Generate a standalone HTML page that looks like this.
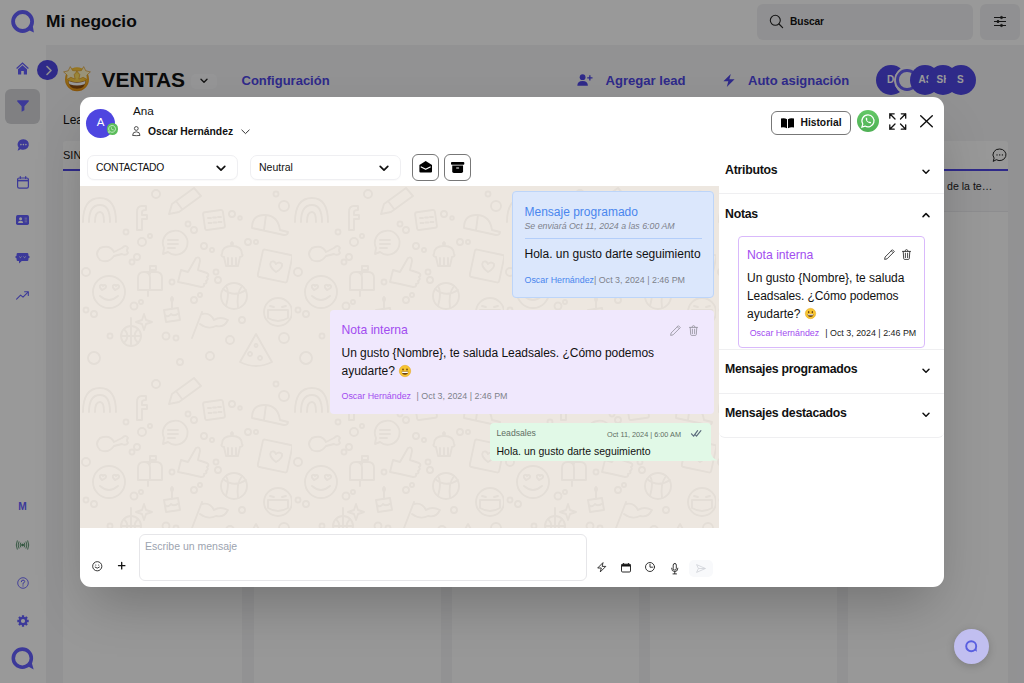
<!DOCTYPE html>
<html lang="es">
<head>
<meta charset="utf-8">
<title>Mi negocio</title>
<style>
*{box-sizing:border-box;margin:0;padding:0}
html,body{width:1024px;height:683px;overflow:hidden}
body{font-family:"Liberation Sans",sans-serif;color:#111;background:#f3f4f6;position:relative}
.abs{position:absolute}
.t{position:absolute;white-space:nowrap;line-height:1}
svg{display:block;position:absolute;overflow:visible}
/* ---------- background app ---------- */
#topbar{left:0;top:0;width:1024px;height:45px;background:#fff}
#sidebar{left:0;top:45px;width:45.600px;height:638px;background:#fff}
.col{position:absolute;top:141px;width:187px;height:560px;background:#fdfdfe;border-radius:3px}
#overlay{left:0;top:0;width:1024px;height:683px;background:rgba(0,0,0,.4)}
.pur{color:#4f46e5}
.av{position:absolute;top:65px;width:30px;height:30px;border-radius:50%;background:#4f46e5;color:#fff;font-weight:700;font-size:10px;overflow:hidden}
/* ---------- modal ---------- */
#modal{left:80px;top:97px;width:864px;height:490px;background:#fff;border-radius:11px;box-shadow:0 25px 50px -12px rgba(0,0,0,.26);overflow:hidden}
.sel{position:absolute;top:58px;height:25px;width:151px;border:1px solid #efeff2;border-radius:7px;background:#fff;box-shadow:0 1px 1px rgba(0,0,0,.025)}
.ibtn{position:absolute;top:57px;width:27px;height:27px;border:1px solid #777;border-radius:6px;background:#fff}
#chat{left:0;top:89px;width:639px;height:342px;background:#ede7e0;overflow:hidden}
.sec{position:absolute;left:639px;width:225px;border-bottom:1px solid #efeff1}
.h{font-weight:700;font-size:12.3px;letter-spacing:-.25px;color:#111}
.f9{font-size:8.9px}
</style>
</head>
<body>

<!-- ================= BACKGROUND APP ================= -->
<div id="topbar" class="abs">
  <svg style="left:10.700px;top:9.900px" width="25" height="25" viewBox="0 0 25 25"><circle cx="11.600" cy="11.500" r="9.500" fill="none" stroke="#6560ff" stroke-width="3.800"/><path d="M17 19.800 L22.900 22.600 L21.800 16z" fill="#6560ff"/></svg>
  <div class="t" style="left:46px;top:13px;font-size:17.400px;font-weight:700">Mi negocio</div>
  <div class="abs" style="left:757px;top:4px;width:216px;height:36px;background:#f1f1f3;border-radius:6px"></div>
  <svg style="left:769px;top:14px" width="15" height="15" viewBox="0 0 15 15"><circle cx="6.3" cy="6.3" r="5" fill="none" stroke="#222" stroke-width="1.1"/><path d="M10 10l3.6 3.6" stroke="#222" stroke-width="1.2" stroke-linecap="round"/></svg>
  <div class="t" style="left:790px;top:16.5px;font-size:10.2px;font-weight:700;letter-spacing:-.1px">Buscar</div>
  <div class="abs" style="left:980px;top:4px;width:40px;height:36px;background:#f1f1f3;border-radius:6px"></div>
  <svg style="left:994px;top:16px" width="12" height="11" viewBox="0 0 12 11" stroke="#222" stroke-width="1" fill="#222"><path d="M0 1.5h12M0 5.5h12M0 9.5h12"/><circle cx="7.5" cy="1.5" r="1.1"/><circle cx="4" cy="5.5" r="1.1"/><circle cx="7.5" cy="9.5" r="1.1"/></svg>
</div>

<div id="sidebar" class="abs">
  <div class="abs" style="left:5px;top:44px;width:35px;height:35px;border-radius:6px;background:#d5d6d9"></div>
  <!-- home -->
  <svg style="left:16px;top:17px" width="13" height="13" viewBox="0 0 13 13" fill="#6560ff"><path d="M6.5 0.3 L0.2 6 L1 6.9 L6.5 2 L12 6.9 L12.8 6z"/><path d="M6.5 3.2 L2 7.2 V12.6 H5.2 V9 H7.8 V12.6 H11 V7.2z"/></svg>
  <!-- funnel -->
  <svg style="left:17px;top:55px" width="12" height="12" viewBox="0 0 12 12" fill="#6560ff"><path d="M0.6 0.3 H11.4 Q12.3 0.6 11.7 1.5 L7.4 6.3 V10.2 L4.6 11.8 V6.3 L0.3 1.5 Q-0.3 0.6 0.6 0.3z"/></svg>
  <!-- chat dots -->
  <svg style="left:16.5px;top:93.5px" width="12.5" height="12.5" viewBox="0 0 12.5 12.5"><path d="M6.4 0.2 A5.7 5.3 0 1 1 3.6 10.2 L0.6 11.8 L1.7 8.6 A5.7 5.3 0 0 1 6.4 0.2z" fill="#6560ff"/><circle cx="3.9" cy="5.6" r=".8" fill="#fff"/><circle cx="6.4" cy="5.6" r=".8" fill="#fff"/><circle cx="8.9" cy="5.6" r=".8" fill="#fff"/></svg>
  <!-- calendar -->
  <svg style="left:17px;top:131px" width="12" height="13" viewBox="0 0 12 13" fill="none" stroke="#6560ff"><rect x=".6" y="2" width="10.8" height="10.2" rx="1.6" stroke-width="1.2"/><path d="M.6 4.6h10.8" stroke-width="1.6"/><path d="M3.3 .5v2M8.7 .5v2" stroke-width="1.2" stroke-linecap="round"/></svg>
  <!-- contact card -->
  <svg style="left:16px;top:170px" width="13" height="10" viewBox="0 0 13 10"><rect width="13" height="10" rx="1.7" fill="#6560ff"/><circle cx="4.6" cy="3.7" r="1.5" fill="#fff"/><path d="M2 8 Q2 5.8 4.6 5.8 Q7.2 5.800 7.200 8z" fill="#fff"/><path d="M8.600 3.200h2.500M8.600 5h2.500M8.600 6.800h2.500" stroke="#bcb8ff" stroke-width=".9"/></svg>
  <!-- bot chat -->
  <svg style="left:15px;top:207.500px" width="15" height="11" viewBox="0 0 15 11" fill="#6560ff"><path d="M2.800 0 H12.200 Q13.400 0 13.400 1.200 V2.600 L15 4 L13.400 5.400 V6.800 Q13.400 8 12.200 8 H6.800 L4 10.600 V8 H2.800 Q1.600 8 1.600 6.800 V5.400 L0 4 L1.600 2.600 V1.200 Q1.600 0 2.800 0z"/><path d="M4.300 3.600 L5.400 4.600 L6.500 3.600M8.500 3.600 L9.600 4.600 L10.700 3.600" stroke="#fff" stroke-width=".8" fill="none"/></svg>
  <!-- trend -->
  <svg style="left:16px;top:246px" width="13" height="9" viewBox="0 0 13 9" fill="none" stroke="#6560ff" stroke-width="1.100" stroke-linecap="round" stroke-linejoin="round"><path d="M.6 8.200 L4.600 4.200 L7 6.200 L12 1.200"/><path d="M8.600 .8 H12.300 V4.500"/></svg>
  <!-- M -->
  <div class="t" style="color:#6560ff;left:18.200px;top:456.500px;font-size:10.200px;font-weight:700">M</div>
  <!-- broadcast -->
  <svg style="left:16px;top:495px" width="13" height="10" viewBox="0 0 13 10" fill="none" stroke="#4d8a63" stroke-width=".9" stroke-linecap="round"><circle cx="6.500" cy="5" r=".9" fill="#4d8a63"/><path d="M4.600 3 Q3.600 5 4.600 7M8.400 3 Q9.400 5 8.400 7M2.900 1.800 Q1.300 5 2.900 8.200M10.100 1.800 Q11.700 5 10.100 8.200M1.200 .8 Q-.8 5 1.200 9.200M11.800 .8 Q13.800 5 11.800 9.200"/></svg>
  <!-- help -->
  <svg style="left:17px;top:532px" width="12" height="12" viewBox="0 0 12 12" fill="none" stroke="#6560ff"><circle cx="6" cy="6" r="5.300" stroke-width=".9"/><path d="M4.300 4.700 Q4.300 3.100 6 3.100 Q7.700 3.100 7.700 4.600 Q7.700 5.600 6 6.300 V7.300" stroke-width="1" stroke-linecap="round"/><circle cx="6" cy="8.900" r=".6" fill="#6560ff" stroke="none"/></svg>
  <!-- gear -->
  <svg style="left:17px;top:569.500px" width="12" height="12" viewBox="0 0 12 12"><circle cx="6" cy="6" r="3.200" fill="none" stroke="#6560ff" stroke-width="2.200"/><g stroke="#6560ff" stroke-width="2.300"><path d="M6 .3v2M6 9.700v2M.3 6h2M9.700 6h2M1.970 1.970l1.400 1.400M8.630 8.630l1.400 1.400M1.970 10.030l1.400-1.400M8.630 3.370l1.400-1.400"/></g></svg>
  <!-- logo -->
  <svg style="left:10.500px;top:602px" width="24" height="24" viewBox="0 0 25 25"><circle cx="11.800" cy="11.600" r="9.400" fill="none" stroke="#6560ff" stroke-width="3.700"/><path d="M16.500 19.500 L23.600 23.400 L21.400 15.500z" fill="#6560ff"/></svg>
</div>

<!-- page header -->
<div class="abs" style="left:37.400px;top:59.800px;width:20.200px;height:20.200px;border-radius:50%;background:#4f46e5"></div>
<svg style="left:44.500px;top:64.500px" width="8" height="11" viewBox="0 0 8 11"><path d="M2 1.500l4 4-4 4" fill="none" stroke="#eee" stroke-width="1.600" stroke-linecap="round" stroke-linejoin="round"/></svg>
<!-- star-struck emoji -->
<svg style="left:63px;top:65.300px" width="28" height="27" viewBox="0 0 28 27">
  <defs><radialGradient id="fg" cx="50%" cy="38%" r="62%"><stop offset="0" stop-color="#ffe46a"/><stop offset=".6" stop-color="#fbc02d"/><stop offset="1" stop-color="#e08a12"/></radialGradient></defs>
  <circle cx="14" cy="14.200" r="12" fill="url(#fg)"/>
  <path d="M5.200 15.500 Q14 19 22.800 15.500 Q22.500 23.500 14 23.800 Q5.500 23.500 5.200 15.500z" fill="#8a4b0d"/>
  <path d="M5.600 16 Q14 19.600 22.400 16 Q22.300 18.300 21.500 19.300 Q14 21.800 6.500 19.300 Q5.700 18.300 5.600 16z" fill="#fff"/>
  <path d="M7.300 1.600 L9.600 5.600 L14.200 6 L11.200 9.600 L12.100 14.100 L7.800 12.300 L3.700 14.600 L4.100 10 L0.600 6.900 L5.200 5.800z" fill="#fff6c8" stroke="#d98f14" stroke-width=".6"/>
  <path d="M20.700 1.600 L18.400 5.600 L13.800 6 L16.800 9.600 L15.900 14.100 L20.200 12.300 L24.300 14.600 L23.900 10 L27.400 6.900 L22.800 5.800z" fill="#fff6c8" stroke="#d98f14" stroke-width=".6"/>
</svg>
<div class="t" style="left:101.500px;top:68.800px;font-size:21px;font-weight:700">VENTAS</div>
<div class="abs" style="left:191px;top:74px;width:26px;height:15px;border-radius:5px;background:#f9f9fb"></div>
<svg style="left:200px;top:78px" width="8" height="6" viewBox="0 0 8 6"><path d="M1 1.300l3 3 3-3" fill="none" stroke="#222" stroke-width="1.400" stroke-linecap="round" stroke-linejoin="round"/></svg>
<div class="t pur" style="left:241.500px;top:74px;font-size:13px;font-weight:700">Configuración</div>
<!-- user plus -->
<svg style="left:577px;top:74px" width="16" height="12" viewBox="0 0 16 12" fill="#4f46e5"><circle cx="5.600" cy="3.200" r="2.900"/><path d="M0.300 11.800 Q0.300 6.900 5.600 6.900 Q10.900 6.900 10.900 11.800z"/><path d="M12.200 1.200h1.300v2h2v1.300h-2v2h-1.300v-2h-2v-1.300h2z"/></svg>
<div class="t pur" style="left:605.500px;top:74px;font-size:13.100px;font-weight:700">Agregar lead</div>
<!-- bolt -->
<svg style="left:723px;top:74px" width="12" height="13" viewBox="0 0 12 13" fill="#4f46e5"><path d="M7.800 0 L0.400 7.300 H5.300 L3.800 13 L11.600 5.200 H6.400z"/></svg>
<div class="t pur" style="left:748px;top:74px;font-size:13px;font-weight:700">Auto asignación</div>
<div class="t" style="left:63px;top:114px;font-size:12px">Leads</div>

<!-- columns -->
<div class="col" style="left:63px;width:179px"></div>
<div class="col" style="left:254px"></div>
<div class="col" style="left:452px"></div>
<div class="col" style="left:650px"></div>
<div class="col" style="left:848px;width:160px"></div>
<div class="t" style="left:63px;top:150px;font-size:11px">SIN</div>
<div class="abs" style="left:63px;top:169.300px;width:179px;height:1.600px;background:#4f46e5"></div>
<div class="abs" style="left:848px;top:169.300px;width:160px;height:1.600px;background:#4f46e5"></div>
<div class="abs" style="left:848px;top:171px;width:160px;height:41px;background:#f7f7f9;border-bottom:1px solid #ececee"></div>
<div class="t" style="left:947px;top:180.500px;font-size:10.600px;color:#222">de la te…</div>
<svg style="left:992px;top:148px" width="15" height="15" viewBox="0 0 15 15" fill="none" stroke="#222" stroke-width="1"><path d="M7.700 1 A6.300 5.800 0 1 1 4.300 11.700 L1.200 13.400 L2.100 10.100 A6.300 5.800 0 0 1 7.700 1z"/><circle cx="5" cy="6.900" r=".7" fill="#222" stroke="none"/><circle cx="7.700" cy="6.900" r=".7" fill="#222" stroke="none"/><circle cx="10.400" cy="6.900" r=".7" fill="#222" stroke="none"/></svg>

<!-- avatars -->
<div class="av" style="left:876px"><span class="t" style="left:11px;top:10px">D</span></div>
<div class="abs" style="left:893.500px;top:65.500px;width:29px;height:29px;border-radius:50%;background:#f4f4f7;border:1.500px solid #fbfbfd"></div>
<div class="abs" style="left:896.400px;top:69.100px;width:21.600px;height:21.600px;border-radius:50%;border:3.700px solid #665ef2"></div>
<div class="av" style="left:910px"><span class="t" style="left:8.500px;top:10px">AS</span></div>
<div class="av" style="left:928px"><span class="t" style="left:8.500px;top:10px">SH</span></div>
<div class="av" style="left:945.500px"><span class="t" style="left:11.500px;top:10px">S</span></div>

<div id="overlay" class="abs"></div>

<!-- floating help widget (above overlay) -->
<div class="abs" style="left:953.500px;top:628.500px;width:35px;height:35px;border-radius:50%;background:#c1bff0;box-shadow:0 2px 8px rgba(0,0,0,.18)"></div>
<svg style="left:964.500px;top:639.500px" width="13" height="13" viewBox="0 0 13 13"><circle cx="6.200" cy="6.200" r="5" fill="none" stroke="#595fe0" stroke-width="1.900"/><path d="M9.200 10 L12 11.800 L11.300 8.300z" fill="#595fe0"/></svg>

<!-- ================= MODAL ================= -->
<div id="modal" class="abs">
  <!-- header -->
  <div class="abs" style="left:6.200px;top:11.500px;width:29px;height:29px;border-radius:50%;background:#4e46e0"></div>
  <div class="t" style="left:16.800px;top:20px;font-size:11.500px;color:#fff">A</div>
  <div class="abs" style="left:26.600px;top:26.200px;width:11.600px;height:11.600px;border-radius:50%;background:#5bbd5b"></div>
  <svg style="left:28.400px;top:28px" width="8" height="8" viewBox="0 0 8 8"><path d="M4.100 .5 A3.400 3.400 0 1 1 2.300 6.800 L.6 7.400 L1.200 5.700 A3.400 3.400 0 0 1 4.100 .5z" fill="none" stroke="#d9f2d9" stroke-width=".8"/><path d="M2.800 2.400 Q2.600 4.600 5.200 5.400 L5.700 4.800 L4.900 4.300 L4.500 4.600 Q3.700 4.200 3.500 3.500 L3.800 3.100 L3.400 2.300z" fill="#d9f2d9"/></svg>
  <div class="t" style="left:53px;top:8.200px;font-size:11.700px">Ana</div>
  <!-- person -->
  <svg style="left:52px;top:29px" width="8.600" height="10" viewBox="0 0 9 10.500" fill="none" stroke="#333" stroke-width=".9"><circle cx="4.500" cy="2.600" r="2"/><path d="M.6 9.900 Q.6 6.100 4.500 6.100 Q8.400 6.100 8.400 9.900 Q4.500 10.400 .6 9.900z"/></svg>
  <div class="t" style="left:68px;top:29.500px;font-size:10.350px;font-weight:700">Oscar Hernández</div>
  <svg style="left:160.500px;top:32px" width="9" height="6" viewBox="0 0 9 6"><path d="M.8 1l3.700 3.600 3.700-3.600" fill="none" stroke="#333" stroke-width="1" stroke-linecap="round" stroke-linejoin="round"/></svg>

  <div class="sel" style="left:6.500px"><span class="t" style="left:8.500px;top:6.500px;font-size:10.300px;letter-spacing:-.25px">CONTACTADO</span>
    <svg style="left:128px;top:8.500px" width="10" height="7" viewBox="0 0 10 7"><path d="M1.200 1.300l3.800 3.800 3.800-3.800" fill="none" stroke="#111" stroke-width="1.700" stroke-linecap="round" stroke-linejoin="round"/></svg></div>
  <div class="sel" style="left:169.500px"><span class="t" style="left:8.500px;top:6.100px;font-size:10.500px">Neutral</span>
    <svg style="left:128px;top:8.500px" width="10" height="7" viewBox="0 0 10 7"><path d="M1.200 1.300l3.800 3.800 3.800-3.800" fill="none" stroke="#111" stroke-width="1.700" stroke-linecap="round" stroke-linejoin="round"/></svg></div>
  <div class="ibtn" style="left:331.900px">
    <svg style="left:5.800px;top:5.900px" width="13.400" height="11.600" viewBox="0 0 14 12"><path d="M7 0 L13.600 4 V10.800 Q13.600 12 12.400 12 H1.600 Q.4 12 .4 10.800 V4z" fill="#000"/><path d="M2.300 6.200 L7 8.600 L11.700 6.200" fill="none" stroke="#fff" stroke-width="1.300" stroke-linecap="round" stroke-linejoin="round"/></svg>
  </div>
  <div class="ibtn" style="left:363.900px">
    <svg style="left:5.800px;top:6.800px" width="13.300" height="11" viewBox="0 0 14 11.500"><rect x="0" y="0" width="14" height="2.800" rx=".9" fill="#000"/><path d="M1.300 3.700 H12.700 V9.800 Q12.700 11.500 11 11.500 H3 Q1.300 11.500 1.300 9.800z" fill="#000"/><rect x="5.300" y="5.700" width="3.400" height="1.100" rx=".5" fill="#fff"/></svg>
  </div>

  <!-- header right -->
  <div class="abs" style="left:690.700px;top:14px;width:80px;height:24px;border:1px solid #777;border-radius:6px"></div>
  <svg style="left:701px;top:20.500px" width="13" height="10.500" viewBox="0 0 13 10.500" fill="#000"><path d="M0 .6 Q3.500 -.4 6 1.200 V10.300 Q3.500 8.900 0 9.500z"/><path d="M13 .6 Q9.500 -.4 7 1.200 V10.300 Q9.500 8.900 13 9.500z"/></svg>
  <div class="t" style="left:720.500px;top:20.500px;font-size:10.250px;font-weight:700">Historial</div>
  <div class="abs" style="left:776.600px;top:12.800px;width:22.500px;height:22.500px;border-radius:50%;background:linear-gradient(#63c866,#4fb055)"></div>
  <svg style="left:780.800px;top:17px" width="14" height="14" viewBox="0 0 14 14"><path d="M7.100 .9 A6 6 0 1 1 4 12.100 L.9 13 L1.800 10 A6 6 0 0 1 7.100 .9z" fill="none" stroke="#fff" stroke-width="1.200"/><path d="M4.800 3.800 Q4.200 7.800 9.300 9.600 L10.300 8.400 L8.800 7.500 L8.100 8.100 Q6.500 7.400 5.900 5.900 L6.500 5.200 L5.800 3.700z" fill="#fff"/></svg>
  <!-- expand -->
  <svg style="left:808.500px;top:15.800px" width="17.500" height="17" viewBox="0 0 17.500 17" fill="none" stroke="#111" stroke-width="1.300" stroke-linecap="round" stroke-linejoin="round"><path d="M.8 5.200 V.8 H5.200 M.8 .8 L6 6"/><path d="M16.700 5.200 V.8 H12.300 M16.700 .8 L11.500 6"/><path d="M.8 11.800 V16.200 H5.200 M.8 16.200 L6 11"/><path d="M16.700 11.800 V16.200 H12.300 M16.700 16.200 L11.500 11"/></svg>
  <!-- close -->
  <svg style="left:840px;top:18px" width="13" height="12.500" viewBox="0 0 13 12.500" stroke="#111" stroke-width="1.400" stroke-linecap="round"><path d="M.7 .7 L12.300 11.800 M12.300 .7 L.7 11.800"/></svg>

  <div id="chat" class="abs">
    <svg style="left:0;top:0" width="639" height="342" viewBox="0 0 639 342">
      <defs>
        <pattern id="doodle" width="212" height="190" patternUnits="userSpaceOnUse">
          <g fill="none" stroke="#e4ded7" stroke-width="1.900" stroke-linecap="round" stroke-linejoin="round">
            <!-- rainbow -->
            <path d="M3 36 Q3 12 20 12 Q36 12 36 36 M9 36 Q9 19 20 19 Q30 19 30 36 M15 36 Q15 26 20 26 Q24 26 24 36"/>
            <!-- f -->
            <path d="M66 20 H62 Q57 20 57 26 V44 H62 V33 H67 V29 H62 V26 Q62 24 66 24z"/>
            <!-- pencil -->
            <path d="M92 18 L114 2 L121 10 L99 26 L89 28z M96 15 L102 23"/>
            <!-- calendar -->
            <rect x="124" y="25" width="20" height="18" rx="2" transform="rotate(-8 134 34)"/><path d="M128 32h3M133 31.500h3M138 31h3M128.500 37h3M133.500 36.500h3M138.500 36h3"/>
            <!-- cap -->
            <path d="M172 42 Q172 28 186 29 Q198 30 200 44 L208 46 Q208 49 204 49 L172 42z M186 29 L184 44"/>
            <!-- chat bubble -->
            <path d="M93 45 A12 12 0 1 1 88 66 L83 68 L84 62 A12 12 0 0 1 93 45z M88 54h10M88 58h10M88 62h7"/>
            <!-- drumstick -->
            <path d="M20 62 Q30 58 34 66 L42 62 Q46 58 48 62 Q46 64 48 67 Q46 70 42 68 L34 70 Q28 78 20 74 Q14 68 20 62z"/>
            <!-- cupcake -->
            <path d="M142 68 Q142 60 152 60 Q162 60 162 68 Q164 70 160 71 L158 80 H146 L144 71 Q140 70 142 68z M148 72v7M152 72v7M156 72v7 M152 60 Q150 57 152 56 Q154 57 152 60"/>
            <!-- thumbs up -->
            <path d="M101 84 L108 86 L116 72 Q120 70 120 75 L118 84 L127 87 Q130 89 127 91 Q129 93 126 95 Q128 97 124 98 Q125 101 121 101 L108 98 L98 96z"/>
            <!-- photo heart -->
            <rect x="180" y="66" width="30" height="28" rx="2" transform="rotate(12 195 80)"/><path d="M196 86 Q188 80 191 76 Q194 74 196 78 Q199 75 202 78 Q203 82 196 86z"/>
            <!-- mailbox -->
            <path d="M58 104 V92 Q58 86 64 86 H76 Q82 86 82 92 V104z M70 104 V92 Q70 86 64 86 M70 88 V80 H76 V84 H70 M68 104 V110"/>
            <!-- heart eyes face -->
            <circle cx="29" cy="106" r="16"/><path d="M20 110 Q29 118 38 110 M22 104 Q18 100 21 99 Q22 98 23 100 Q25 98 26 100 Q27 102 22 104z M35 104 Q31 100 34 99 Q35 98 36 100 Q38 98 39 100 Q40 102 35 104z"/>
            <!-- basketball -->
            <circle cx="154" cy="110" r="13"/><path d="M143 103 Q154 112 166 104 M146 120 Q150 106 146 100 M158 122 Q156 108 162 100"/>
            <!-- cake -->
            <path d="M84 124 L98 122 L100 134 L86 136z M85 129 Q88 132 91 128 Q94 131 99 127 M92 122 V116 M92 116 Q90 113 92 111 Q94 113 92 116"/>
            <!-- flag moustache -->
            <path d="M112 152 L122 126 M122 128 Q130 126 134 134 Q140 130 148 134 Q144 142 136 140 Q128 144 120 138"/>
            <!-- mask face -->
            <circle cx="198" cy="126" r="14"/><path d="M188 124 H208 V132 Q198 138 188 132z M190 120 L194 121 M206 120 L202 121"/>
            <!-- disco ball -->
            <circle cx="51" cy="150" r="10"/><path d="M41 150h20M51 140v20M44 143 Q51 150 44 157M58 143 Q51 150 58 157 M51 140 V132 M62 134 L64 128 L66 134 L72 136 L66 138 L64 144 L62 138 L56 136z"/>
            <!-- pizza -->
            <path d="M176 148 L160 176 Q176 184 192 176z M170 166 a2 2 0 1 0 .1 0 M180 170 a2 2 0 1 0 .1 0 M176 158 a1.500 1.500 0 1 0 .1 0"/>
            <!-- bulb -->
            <path d="M224 96 a7 7 0 1 1 10 6 v4 h-6 v-4 a7 7 0 0 1 -4 -6"/>
            <!-- bubbles -->
            <circle cx="76" cy="8" r="4"/><circle cx="46" cy="46" r="2.500"/><circle cx="62" cy="56" r="4"/><circle cx="70" cy="50" r="2"/>
            <circle cx="114" cy="44" r="3"/><circle cx="108" cy="38" r="2.500"/><circle cx="152" cy="28" r="3"/><circle cx="160" cy="32" r="1.800"/>
            <circle cx="124" cy="60" r="3"/><circle cx="132" cy="64" r="2"/><circle cx="168" cy="56" r="3"/><circle cx="176" cy="56" r="2"/>
            <circle cx="52" cy="76" r="2.500"/><circle cx="57" cy="71" r="3"/><circle cx="6" cy="86" r="4"/><circle cx="92" cy="96" r="2.500"/>
            <circle cx="138" cy="94" r="3"/><circle cx="136" cy="86" r="2.500"/><circle cx="114" cy="114" r="3"/><circle cx="120" cy="109" r="2"/>
            <circle cx="54" cy="120" r="3.500"/><circle cx="61" cy="116" r="2"/><circle cx="14" cy="128" r="3"/><circle cx="6" cy="124" r="2.500"/>
            <circle cx="86" cy="150" r="3.500"/><circle cx="96" cy="152" r="2.500"/><circle cx="150" cy="154" r="4"/><circle cx="162" cy="134" r="3"/>
            <circle cx="204" cy="152" r="5"/><circle cx="14" cy="172" r="6"/><circle cx="100" cy="176" r="3"/><circle cx="130" cy="170" r="4"/>
            <circle cx="30" cy="150" r="2.500"/><circle cx="204" cy="20" r="5"/><circle cx="196" cy="8" r="2.500"/>
          </g>
        </pattern>
      </defs>
      <rect width="639" height="342" fill="url(#doodle)"/>
    </svg>
    <!-- scheduled -->
    <div class="abs" style="left:432px;top:5px;width:202px;height:107px;background:#dbe7fc;border:1px solid #bdd5f9;border-radius:4px"></div>
    <div class="t" style="left:444.500px;top:20px;font-size:12px;color:#4a86ee">Mensaje programado</div>
    <div class="t" style="left:444.500px;top:36px;font-size:8.800px;font-style:italic;color:#7e828b">Se enviará Oct 11, 2024 a las 6:00 AM</div>
    <div class="abs" style="left:444.500px;top:52px;width:177px;height:1px;background:#b3cefa"></div>
    <div class="t" style="left:444.500px;top:61.500px;font-size:12px">Hola. un gusto darte seguimiento</div>
    <div class="t f9" style="left:444.500px;top:89.500px;color:#7e828b"><span style="color:#4a86ee">Oscar Hernández</span>| Oct 3, 2024 | 2:46 PM</div>
    <!-- note -->
    <div class="abs" style="left:250px;top:124px;width:383.500px;height:104px;background:#f0e8fd;border-radius:4px"></div>
    <div class="t" style="left:261.500px;top:138px;font-size:12.200px;color:#a24df0">Nota interna</div>
    <svg style="left:590px;top:138.500px" width="11" height="11" viewBox="0 0 11 11" fill="none" stroke="#9a97a3" stroke-width=".9" stroke-linejoin="round"><path d="M8.400 .7 L10.300 2.600 L3 9.900 L.6 10.400 L1.100 8z M7.300 1.800 L9.200 3.700"/></svg>
    <svg style="left:608.500px;top:138.500px" width="9" height="11" viewBox="0 0 9 11" fill="none" stroke="#9a97a3" stroke-width=".9" stroke-linecap="round" stroke-linejoin="round"><path d="M.5 2.400 H8.500 M3 2.400 Q3 .6 4.500 .6 Q6 .6 6 2.400 M1.200 2.400 L1.700 9.600 Q1.800 10.400 2.600 10.400 H6.400 Q7.200 10.400 7.300 9.600 L7.800 2.400 M3.400 4.200 V8.600 M5.600 4.200 V8.600"/></svg>
    <div class="t" style="left:261.500px;top:160.500px;font-size:12px;letter-spacing:-.03px">Un gusto {Nombre}, te saluda Leadsales. ¿Cómo podemos</div>
    <div class="t" style="left:261.500px;top:178.500px;font-size:12px">ayudarte?</div>
    <svg style="left:319px;top:178.500px" width="12" height="12" viewBox="0 0 12 12"><circle cx="6" cy="6" r="5.700" fill="#f7c531"/><circle cx="6" cy="6" r="5.700" fill="none" stroke="#e2a21d" stroke-width=".5"/><ellipse cx="4" cy="4.500" rx=".8" ry="1.100" fill="#6b4310"/><ellipse cx="8" cy="4.500" rx=".8" ry="1.100" fill="#6b4310"/><path d="M2.700 6.600 H9.300 Q9 9.800 6 9.800 Q3 9.800 2.700 6.600z" fill="#6b4310"/><path d="M3 6.800 H9 Q8.950 7.600 8.700 7.900 H3.300 Q3.050 7.600 3 6.800z" fill="#fff"/></svg>
    <div class="t f9" style="left:261.500px;top:206px;color:#7e828b"><span style="color:#a24df0">Oscar Hernández</span><span style="margin-left:5.500px">| Oct 3, 2024 | 2:46 PM</span></div>
    <!-- sent -->
    <div class="abs" style="left:410px;top:237px;width:220.500px;height:37.500px;background:#e1f9e7;border-radius:4px 4px 0 4px"></div>
    <svg style="left:628px;top:264px" width="10" height="10.500" viewBox="0 0 10 10.500"><path d="M0 0 H2.500 Q2.600 8 9.800 10.500 H0z" fill="#e1f9e7"/></svg>
    <div class="t" style="left:416.500px;top:243px;font-size:8.650px;color:#5f6e64">Leadsales</div>
    <div class="t" style="left:527px;top:244.500px;font-size:7.300px;color:#5f6e64">Oct 11, 2024 | 6:00 AM</div>
    <svg style="left:611px;top:244px" width="10.500" height="7" viewBox="0 0 10.500 7" fill="none" stroke="#5b6b7c" stroke-width="1.150" stroke-linecap="round" stroke-linejoin="round"><path d="M.5 3.800 L2.600 6.200 L6.600 .6 M4.600 5.200 L5.500 6.200 L9.900 .6"/></svg>
    <div class="t" style="left:416.500px;top:259.500px;font-size:10.500px">Hola. un gusto darte seguimiento</div>
  </div>

  <!-- right panel -->
  <div class="sec" style="top:50px;height:47px"><span class="t h" style="left:6px;top:17px">Atributos</span>
    <svg style="left:203.200px;top:22px" width="8" height="6" viewBox="0 0 8 6"><path d="M1 1.200l3 3 3-3" fill="none" stroke="#111" stroke-width="1.500" stroke-linecap="round" stroke-linejoin="round"/></svg></div>
  <div class="sec" style="top:97px;height:156px"><span class="t h" style="left:6px;top:13.500px">Notas</span>
    <svg style="left:203.200px;top:17.500px" width="8" height="6" viewBox="0 0 8 6"><path d="M1 4.600l3-3 3 3" fill="none" stroke="#111" stroke-width="1.500" stroke-linecap="round" stroke-linejoin="round"/></svg></div>
  <div class="sec" style="top:253px;height:44px"><span class="t h" style="left:6px;top:13px">Mensajes programados</span>
    <svg style="left:203.200px;top:18px" width="8" height="6" viewBox="0 0 8 6"><path d="M1 1.200l3 3 3-3" fill="none" stroke="#111" stroke-width="1.500" stroke-linecap="round" stroke-linejoin="round"/></svg></div>
  <div class="sec" style="top:297px;height:44px;border-radius:0 0 6px 6px"><span class="t h" style="left:6px;top:13px">Mensajes destacados</span>
    <svg style="left:203.200px;top:18px" width="8" height="6" viewBox="0 0 8 6"><path d="M1 1.200l3 3 3-3" fill="none" stroke="#111" stroke-width="1.500" stroke-linecap="round" stroke-linejoin="round"/></svg></div>
  <div class="abs" style="left:658px;top:139px;width:187px;height:112px;border:1px solid #d9b9fb;border-radius:4px"></div>
  <div class="t" style="left:667px;top:151.500px;font-size:12.200px;color:#a24df0">Nota interna</div>
  <svg style="left:803.500px;top:152px" width="11" height="11" viewBox="0 0 11 11" fill="none" stroke="#333" stroke-width=".9" stroke-linejoin="round"><path d="M8.400 .7 L10.300 2.600 L3 9.900 L.6 10.400 L1.100 8z M7.300 1.800 L9.200 3.700"/></svg>
  <svg style="left:822px;top:152px" width="9" height="11" viewBox="0 0 9 11" fill="none" stroke="#333" stroke-width=".9" stroke-linecap="round" stroke-linejoin="round"><path d="M.5 2.400 H8.500 M3 2.400 Q3 .6 4.500 .6 Q6 .6 6 2.400 M1.200 2.400 L1.700 9.600 Q1.800 10.400 2.600 10.400 H6.400 Q7.200 10.400 7.300 9.600 L7.800 2.400 M3.400 4.200 V8.600 M5.600 4.200 V8.600"/></svg>
  <div class="t" style="left:667px;top:174.500px;font-size:12px">Un gusto {Nombre}, te saluda</div>
  <div class="t" style="left:667px;top:192.500px;font-size:12px;letter-spacing:-.08px">Leadsales. ¿Cómo podemos</div>
  <div class="t" style="left:667px;top:210.500px;font-size:12px">ayudarte?</div>
  <svg style="left:725px;top:210.500px" width="11" height="11" viewBox="0 0 12 12"><circle cx="6" cy="6" r="5.700" fill="#f7c531"/><circle cx="6" cy="6" r="5.700" fill="none" stroke="#e2a21d" stroke-width=".5"/><ellipse cx="4" cy="4.500" rx=".8" ry="1.100" fill="#6b4310"/><ellipse cx="8" cy="4.500" rx=".8" ry="1.100" fill="#6b4310"/><path d="M2.700 6.600 H9.300 Q9 9.800 6 9.800 Q3 9.800 2.700 6.600z" fill="#6b4310"/><path d="M3 6.800 H9 Q8.950 7.600 8.700 7.900 H3.300 Q3.050 7.600 3 6.800z" fill="#fff"/></svg>
  <div class="t f9" style="left:669.700px;top:232px;color:#222"><span style="color:#a24df0">Oscar Hernández</span><span style="margin-left:6px">| Oct 3, 2024 | 2:46 PM</span></div>

  <!-- composer -->
  <div class="abs" style="left:58.500px;top:437px;width:448.500px;height:47px;border:1px solid #e6e6e9;border-radius:6px"></div>
  <div class="t" style="left:65px;top:444px;font-size:10.500px;color:#9ca3af">Escribe un mensaje</div>
  <svg style="left:12px;top:463.700px" width="10.500" height="10.500" viewBox="0 0 10.500 10.500" fill="none" stroke="#222" stroke-width=".9"><circle cx="5.250" cy="5.250" r="4.600"/><path d="M3.100 6.200 Q5.250 8.400 7.400 6.200" stroke-linecap="round"/><circle cx="3.800" cy="4" r=".55" fill="#222" stroke="none"/><circle cx="6.700" cy="4" r=".55" fill="#222" stroke="none"/></svg>
  <svg style="left:38px;top:465.400px" width="7.400" height="7.400" viewBox="0 0 7.400 7.400" stroke="#111" stroke-width="1.300" stroke-linecap="round"><path d="M3.700 .5 V6.900 M.5 3.700 H6.900"/></svg>
  <!-- bolt outline -->
  <svg style="left:517px;top:465px" width="9.500" height="10.500" viewBox="0 0 9.500 10.500" fill="none" stroke="#222" stroke-width=".9" stroke-linejoin="round"><path d="M6 .6 L.7 6 H4.300 L3.300 9.900 L8.800 4.400 H5.200z"/></svg>
  <!-- calendar -->
  <svg style="left:541px;top:465.500px" width="10" height="9.500" viewBox="0 0 10 9.500" fill="none" stroke="#111"><rect x=".5" y="1.200" width="9" height="7.800" rx="1.100" stroke-width=".9"/><path d="M.5 2.400 H9.500" stroke-width="2.200"/><path d="M2.600 0 V1.400 M7.400 0 V1.400" stroke-width=".9"/></svg>
  <!-- clock -->
  <svg style="left:565px;top:465.300px" width="10" height="10" viewBox="0 0 10 10" fill="none" stroke="#222" stroke-width=".9" stroke-linecap="round"><circle cx="5" cy="5" r="4.500"/><path d="M5 2.200 V5.200 H7.600"/></svg>
  <!-- mic -->
  <svg style="left:590.500px;top:465.500px" width="7.500" height="11.500" viewBox="0 0 7.500 11.500" fill="none" stroke="#222" stroke-width=".9" stroke-linecap="round"><rect x="2.200" y=".5" width="3.100" height="6.600" rx="1.550"/><path d="M.6 5.200 Q.6 8.600 3.750 8.600 Q6.900 8.600 6.900 5.200 M3.750 8.600 V10.600 M2 10.900 H5.500"/></svg>
  <!-- send -->
  <div class="abs" style="left:609.300px;top:463px;width:24px;height:17px;border-radius:5px;background:#f8f9fb"></div>
  <svg style="left:616.400px;top:467px" width="10" height="9" viewBox="0 0 10 9" fill="none" stroke="#cfd2d8" stroke-width=".8" stroke-linejoin="round"><path d="M.6 .6 L9.400 4.500 L.6 8.400 L2.400 4.500z M2.400 4.500 H9.400"/></svg>
</div>

</body>
</html>
